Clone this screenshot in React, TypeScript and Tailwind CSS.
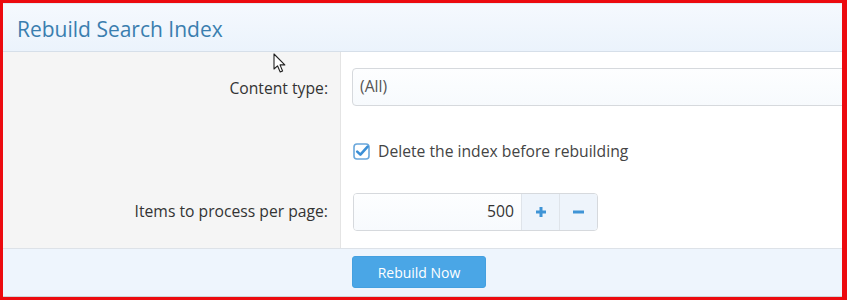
import { useState } from "react";

function CheckIcon() {
    return (
        <svg width="17" height="17" viewBox="0 0 17 17">
            <rect x="1" y="1" width="15" height="15" rx="3" fill="#fff" stroke="#6aa7db" strokeWidth="1.6" />
            <path d="M4.2 8.6 L7.4 11.6 L14.6 3.6" fill="none" stroke="#3b8fd6" strokeWidth="2.6" strokeLinecap="round" strokeLinejoin="round" />
        </svg>
    );
}

function Cursor() {
    return (
        <svg className="absolute left-[270px] top-[50px]" width="14" height="21" viewBox="0 0 14 21">
            <path d="M1 1 L1 16 L4.5 12.8 L7.2 19 L9.6 18 L7 11.9 L11.8 11.9 Z" fill="#fff" stroke="#222" strokeWidth="1.1" strokeLinejoin="round" />
        </svg>
    );
}

export default function App() {
    const [items, setItems] = useState(500);
    const [deleteFirst, setDeleteFirst] = useState(true);

    return (
        <div className="relative w-[847px] h-[300px] overflow-hidden border-t-[3px] border-l-[3px] border-r-[5px] border-b-[3px] border-[#ec0a0f] bg-white font-['Open_Sans',sans-serif] flex flex-col">

            {/* Titre */}
            <div className="h-[49px] shrink-0 border-t border-[#e4ebf3] border-b border-b-[#d6dfe9] bg-gradient-to-b from-[#f5f9fe] to-[#ebf3fc] flex items-center px-[14px] pt-[3px]">
                <h1 className="text-[21px] text-[#3a7eaf] leading-none">Rebuild Search Index</h1>
            </div>

            {/* Formulaire */}
            <div className="flex-1 flex flex-col text-[15.7px] text-[#333]">
                <div className="flex h-[68px]">
                    <div className="w-[338px] shrink-0 bg-[#f5f5f5] border-r border-[#e4e4e4] pr-[12px] pt-[25px] text-right">
                        Content type:
                    </div>
                    <div className="flex-1 pl-[11px] pt-[16px] overflow-hidden">
                        <div className="w-[600px] h-[38px] border border-[#d6d9dd] rounded-[4px] bg-gradient-to-b from-[#fdfeff] to-[#f7fafd] flex items-center px-[7px] text-[#555]">
                            (All)
                        </div>
                    </div>
                </div>

                <div className="flex h-[64px]">
                    <div className="w-[338px] shrink-0 bg-[#f5f5f5] border-r border-[#e4e4e4]" />
                    <div className="flex-1 pl-[12px] flex items-center">
                        <label className="flex items-center gap-[8px] cursor-pointer text-[#444]" onClick={() => setDeleteFirst(!deleteFirst)}>
                            {deleteFirst ? <CheckIcon /> : <span className="w-[17px] h-[17px] border border-[#aaa] rounded-[3px]" />}
                            Delete the index before rebuilding
                        </label>
                    </div>
                </div>

                <div className="flex flex-1">
                    <div className="w-[338px] shrink-0 bg-[#f5f5f5] border-r border-[#e4e4e4] pr-[12px] pt-[16px] text-right">
                        Items to process per page:
                    </div>
                    <div className="flex-1 pl-[12px] pt-[9px]">
                        <div className="flex w-[245px] h-[38px] border border-[#d6d9dd] rounded-[4px] overflow-hidden">
                            <div className="w-[167px] bg-gradient-to-b from-[#fdfeff] to-[#f7fafd] flex items-center justify-end pr-[7px] text-[#333]">
                                {items}
                            </div>
                            <button className="w-[38px] border-l border-[#dfe4ea] bg-[#eef4fb] flex items-center justify-center" onClick={() => setItems(items + 1)}>
                                <svg width="12" height="12" viewBox="0 0 12 12">
                                    <path d="M6 1 V11 M1 6 H11" stroke="#3f94d6" strokeWidth="3" />
                                </svg>
                            </button>
                            <button className="flex-1 border-l border-[#dfe4ea] bg-[#eef4fb] flex items-center justify-center" onClick={() => setItems(items - 1)}>
                                <svg width="13" height="12" viewBox="0 0 13 12">
                                    <path d="M1 6 H12" stroke="#3f94d6" strokeWidth="3" />
                                </svg>
                            </button>
                        </div>
                    </div>
                </div>
            </div>

            {/* Rodapé */}
            <div className="h-[49px] shrink-0 border-t border-[#dde2e8] border-b border-b-[#d0d4d8] bg-[#eef5fd] pl-[349px] pt-[7px]">
                <button className="w-[134px] h-[32px] rounded-[3px] bg-[#4aa6e6] border border-[#44a0e0] text-white text-[14px]">
                    Rebuild Now
                </button>
            </div>

            <Cursor />
        </div>
    );
}
